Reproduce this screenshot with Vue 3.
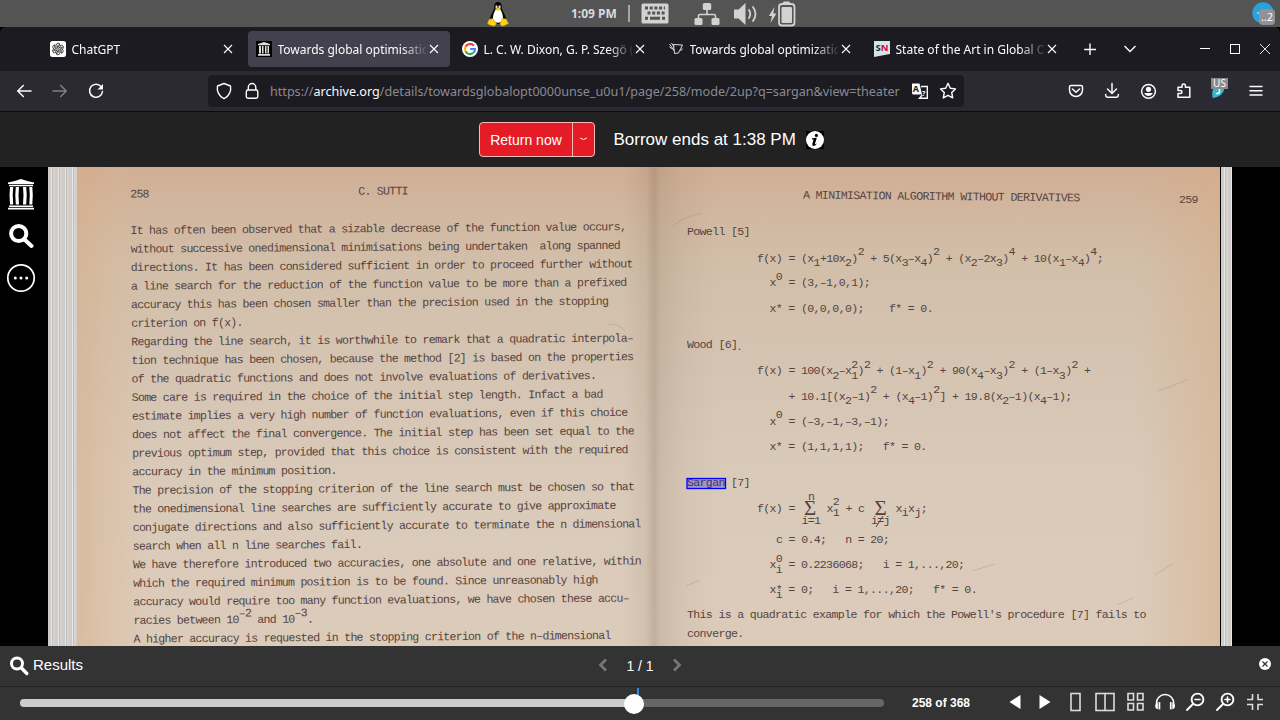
<script setup>
const tabs = [
  { title: 'ChatGPT', icon: 'gpt' },
  { title: 'Towards global optimisation', icon: 'archive', active: true },
  { title: 'L. C. W. Dixon, G. P. Szegö (e', icon: 'google' },
  { title: 'Towards global optimization', icon: 'sketch' },
  { title: 'State of the Art in Global Opt', icon: 'sn' },
]

// Typewritten notation: ^ raises the next character, _ lowers it, ~ steps back one column.
function parse(src, pitch) {
  const out = []
  let current = 0
  let dx = 0
  let i = 0
  while (i < src.length) {
    if (src[i] === '~') { dx -= pitch; i++; continue }
    let level = 0
    if (src[i] === '^') { level = -6.5; i++ } else if (src[i] === '_') { level = 4.5; i++ }
    const last = out[out.length - 1]
    if (last && level === current && !dx) last.t += src[i]
    else out.push({ t: src[i], dy: level - current, dx })
    current = level
    dx = 0
    i++
  }
  return out
}

const leftLines = [
  'It has often been observed that a sizable decrease of the function value occurs,',
  'without successive onedimensional minimisations being undertaken  along spanned',
  'directions. It has been considered sufficient in order to proceed further without',
  'a line search for the reduction of the function value to be more than a prefixed',
  'accuracy this has been chosen smaller than the precision used in the stopping',
  'criterion on f(x).',
  'Regarding the line search, it is worthwhile to remark that a quadratic interpola–',
  'tion technique has been chosen, because the method [2] is based on the properties',
  'of the quadratic functions and does not involve evaluations of derivatives.',
  'Some care is required in the choice of the initial step length. Infact a bad',
  'estimate implies a very high number of function evaluations, even if this choice',
  'does not affect the final convergence. The initial step has been set equal to the',
  'previous optimum step, provided that this choice is consistent with the required',
  'accuracy in the minimum position.',
  'The precision of the stopping criterion of the line search must be chosen so that',
  'the onedimensional line searches are sufficiently accurate to give approximate',
  'conjugate directions and also sufficiently accurate to terminate the n dimensional',
  'search when all n line searches fail.',
  'We have therefore introduced two accuracies, one absolute and one relative, within',
  'which the required minimum position is to be found. Since unreasonably high',
  'accuracy would require too many function evaluations, we have chosen these accu–',
  'racies between 10^–^2 and 10^–^3.',
  'A higher accuracy is requested in the stopping criterion of the n–dimensional',
].map((s) => parse(s, 6.2))

const rightLines = [
  [687, 234.5, 'Powell [5]'],
  [757, 261.5, 'f(x) = (x_1+10x_2)^2 + 5(x_3–x_4)^2 + (x_2–2x_3)^4 + 10(x_1–x_4)^4;'],
  [769.5, 286, 'x^0 = (3,–1,0,1);'],
  [769.5, 311.5, 'x* = (0,0,0,0);    f* = 0.'],
  [687, 348, 'Wood [6]'],
  [757, 374, 'f(x) = 100(x_2–x_1~^2)^2 + (1–x_1)^2 + 90(x_4–x_3)^2 + (1–x_3)^2 +'],
  [788.5, 399.5, '+ 10.1[(x_2–1)^2 + (x_4–1)^2] + 19.8(x_2–1)(x_4–1);'],
  [769.5, 424.5, 'x^0 = (–3,–1,–3,–1);'],
  [769.5, 449.5, 'x* = (1,1,1,1);   f* = 0.'],
  [687, 486, 'Sargan [7]'],
  [757, 511.5, 'f(x) ='],
  [826.5, 511.5, 'x_1~^2 + c'],
  [895.5, 511.5, 'x_ix_j;'],
  [776, 542.5, 'c = 0.4;   n = 20;'],
  [769.5, 568, 'x^0~_i = 0.2236068;   i = 1,...,20;'],
  [769.5, 593, 'x*~_i = 0;   i = 1,...,20;   f* = 0.'],
  [687, 618, "This is a quadratic example for which the Powell's procedure [7] fails to"],
  [687, 637, 'converge.'],
].map(([x, y, s]) => ({ x, y, parts: parse(s, 6.29) }))
</script>

<template>
  <div class="screen">
    <header class="panel">
      <svg class="tux" width="24" height="26" viewBox="0 0 24 26">
        <path d="M12 1C9 1 8 3.500 8.300 7.500C7 11 4 14 4 19.500C5 24 19 24 20 19.500C20.300 15 17 11 15.800 7.500C16 3.500 15 1 12 1Z" fill="#050505" />
        <path d="M9.500 8.500C8 12 6.800 14 7 18C8 23 16 23 17 18C17.200 14 15.800 11 14.500 8.500Z" fill="#fff" />
        <ellipse cx="10.500" cy="5.700" rx="1.100" ry="1.500" fill="#ddd" /><ellipse cx="13.600" cy="5.700" rx="1.100" ry="1.500" fill="#ddd" />
        <path d="M9 7.800L12 6.600L15.200 7.800L12 10Z" fill="#fcc916" />
        <path d="M1.500 23L3 18.500L6.500 17.500L10.500 22.500C10 25 7 25.500 5.500 24.500ZM22.500 22.500L20 18L16.500 17.500L14 22.500C14 25 17 25.500 18.500 24.500Z" fill="#fcd016" stroke="#d59a00" stroke-width=".5" />
      </svg>
      <span class="clock">1:09 PM</span>
      <i class="divider"></i>
      <svg class="kbd" width="28" height="21" viewBox="0 0 28 21">
        <rect x=".5" y=".5" width="27" height="20" rx="1.500" fill="#d2d2d2" />
        <path d="M4 5H24M6.500 10H24" stroke="#555" stroke-width="3" stroke-dasharray="3 1.700" />
        <path d="M4 15.300H7M9 15.300H19M21 15.300H24" stroke="#555" stroke-width="3" />
      </svg>
      <svg class="net" width="26" height="24" viewBox="0 0 26 24" fill="#d2d2d2">
        <rect x="8.800" y="1" width="8.400" height="7" rx="1.500" /><rect x=".5" y="16" width="8" height="7" rx="1.500" /><rect x="17.500" y="16" width="8" height="7" rx="1.500" />
        <path d="M13 7V12.500M4.500 17V14Q4.500 12.500 6 12.500H20Q21.500 12.500 21.500 14V17" fill="none" stroke="#d2d2d2" stroke-width="1.600" />
      </svg>
      <svg class="vol" width="26" height="24" viewBox="0 0 26 24">
        <path d="M1 7.500H5.500L12.500 1V23L5.500 16.500H1Z" fill="#d2d2d2" />
        <path d="M16 8Q18.500 12 16 16M20 5Q25 12 20 19" fill="none" stroke="#d2d2d2" stroke-width="1.800" stroke-linecap="round" />
      </svg>
      <svg class="bat" width="28" height="26" viewBox="0 0 28 26">
        <path d="M6.500 6L.8 15H4L2.500 22L8.500 12.500H5.300Z" fill="#d2d2d2" />
        <rect x="11" y="3" width="15.500" height="21.500" rx="3" fill="none" stroke="#d2d2d2" stroke-width="1.800" />
        <rect x="13.500" y="6" width="10.500" height="16" rx="1" fill="#d2d2d2" /><rect x="15" y=".5" width="7" height="3" rx="1" fill="#d2d2d2" />
      </svg>
      <span class="chat">
        <svg width="22" height="22" viewBox="0 0 22 22"><circle cx="11" cy="11" r="10.700" fill="#2aa1dc" /><path d="M4 11L15 8.500L12 15L9 12Z" fill="#fff" /></svg>
        <b class="count">..2</b>
      </span>
    </header>

    <nav class="tabs">
      <div v-for="tab in tabs" :key="tab.icon" class="tab" :class="{ active: tab.active }">
        <svg v-if="tab.icon === 'gpt'" width="16" height="16" viewBox="0 0 16 16">
          <rect width="16" height="16" rx="2.500" fill="#fff" />
          <g fill="none" stroke="#222" stroke-width=".8">
            <path v-for="a in 6" :key="a" :transform="`rotate(${a * 60} 8 8)`" d="M6 7V4.500Q6.100 2.400 8 2.200Q9.300 2.200 10 3.200L7.400 4.700V7.500" />
          </g>
        </svg>
        <svg v-else-if="tab.icon === 'archive'" width="16" height="16" viewBox="0 0 16 16">
          <rect width="16" height="16" fill="#000" />
          <path d="M2 3L8 1L14 3V4.300H2ZM3 5H5V12.500H3ZM6 5H7.500V12.500H6ZM9 5H10.500V12.500H9ZM11.500 5H13V12.500H11.500ZM2 13H14V14.800H2Z" fill="#ddd" />
        </svg>
        <svg v-else-if="tab.icon === 'google'" width="16" height="16" viewBox="0 0 16 16">
          <circle cx="8" cy="8" r="8" fill="#fff" />
          <g fill="none" stroke-width="2.100">
            <path d="M11.800 4.700A5 5 0 0 0 3.500 5.700" stroke="#ea4335" /><path d="M3.500 5.700A5 5 0 0 0 3.500 10.300" stroke="#fbbc05" />
            <path d="M3.500 10.300A5 5 0 0 0 11.300 11.800" stroke="#34a853" /><path d="M11.300 11.800A5 5 0 0 0 13 8H8.200" stroke="#4285f4" />
          </g>
        </svg>
        <svg v-else-if="tab.icon === 'sketch'" width="16" height="16" viewBox="0 0 16 16">
          <path d="M5.500 3.500L14.500 4L10.500 12L6.500 12.500ZM1.500 3L6.500 10M3.500 2L6 6M1.500 6L5.500 8.500M12.500 10L14.500 7.500" fill="none" stroke="#ddd" stroke-width="1" />
        </svg>
        <svg v-else width="16" height="16" viewBox="0 0 16 16">
          <path d="M0 0H16V13L0 16Z" fill="#d5e4e8" />
          <text x="1.600" y="10" class="sn" fill="#01324b">S<tspan fill="#e3002b">N</tspan></text>
        </svg>
        <span class="title">{{ tab.title }}</span>
        <svg class="close" width="12" height="12" viewBox="0 0 12 12"><path d="M2 2L10 10M10 2L2 10" stroke="#fbfbfe" stroke-width="1.100" /></svg>
      </div>
      <div class="tab-tools">
        <svg width="40" height="24" viewBox="0 0 40 24"><path d="M20 6.500V18M14.200 12.500H26" stroke="#fbfbfe" stroke-width="1.400" /></svg>
        <svg width="40" height="24" viewBox="0 0 40 24"><path d="M14.500 9L20 14.500L25.500 9" fill="none" stroke="#fbfbfe" stroke-width="1.400" /></svg>
      </div>
      <div class="win-tools">
        <svg width="30" height="24" viewBox="0 0 30 24"><path d="M10 11.500H20" stroke="#fff" stroke-width="1" /></svg>
        <svg width="30" height="24" viewBox="0 0 30 24"><rect x="10.500" y="7.500" width="9" height="9" fill="none" stroke="#fff" /></svg>
        <svg width="30" height="24" viewBox="0 0 30 24"><path d="M10 7L20 17M20 7L10 17" stroke="#fff" stroke-width=".9" /></svg>
      </div>
    </nav>

    <div class="toolbar">
      <div class="nav-icons">
        <svg class="tool" viewBox="0 0 36 36"><path d="M25 18H12M17.300 12.500L11.800 18L17.300 23.500" /></svg>
        <svg class="tool dim" viewBox="0 0 36 36"><path d="M11 18H24M18.700 12.500L24.200 18L18.700 23.500" /></svg>
        <svg class="tool" viewBox="0 0 36 36"><path d="M23.500 14.200A6.500 6.500 0 1 0 24.500 18.500" /><path d="M25 11V16.500H19.500Z" fill="#fbfbfe" stroke="none" /></svg>
      </div>
      <div class="urlbar">
        <svg class="uicon" viewBox="0 0 28 32"><path d="M14 8.500L20.500 11C21.500 16 19 21.500 14 23.700C9 21.500 6.500 16 7.500 11Z" stroke-linejoin="round" /></svg>
        <svg class="uicon" viewBox="0 0 28 32"><rect x="8.300" y="15" width="11.500" height="8.300" rx="1.700" /><path d="M10.300 15V12.500A3.700 4 0 0 1 17.800 12.500V15" /></svg>
        <span class="url">https://<em>archive.org</em>/details/towardsglobalopt0000unse_u0u1/page/258/mode/2up?q=sargan&amp;view=theater</span>
        <svg class="uicon" viewBox="0 0 28 32">
          <path d="M6 8.500H13.500L16 19.500H7.500Q6 19.500 6 18Z" fill="#fbfbfe" stroke="none" /><path d="M15 11.500H21.300V23.200H13.500L16.200 20" />
          <text x="6.800" y="16.500" class="glyph dark">A</text><text x="16" y="20.500" class="glyph small">?</text>
        </svg>
        <svg class="uicon" viewBox="0 0 28 32"><path d="M14 8.300L16.300 13.200L21.500 13.900L17.700 17.500L18.700 22.900L14 20.300L9.300 22.900L10.300 17.500L6.500 13.900L11.700 13.200Z" stroke-linejoin="round" /></svg>
      </div>
      <div class="ext-icons">
        <svg class="tool" viewBox="0 0 36 36"><path d="M13 12.500H23Q24.500 12.500 24.500 14V17A6.500 6.500 0 0 1 11.500 17V14Q11.500 12.500 13 12.500ZM14.500 16L18 19.300L21.500 16" /></svg>
        <svg class="tool" viewBox="0 0 36 36"><path d="M18 10.500V20.500M13.500 16L18 20.500L22.500 16M11.700 21.500V22.500Q11.700 24.200 13.400 24.200H22.600Q24.300 24.200 24.300 22.500V21.500" /></svg>
        <svg class="tool" viewBox="0 0 36 36"><circle cx="18.500" cy="18.300" r="6.900" /><circle cx="18.500" cy="16.300" r="2.600" fill="#fbfbfe" stroke="none" /><path d="M14.200 20H22.800Q21.500 23 18.500 23Q15.500 23 14.200 20Z" fill="#fbfbfe" stroke="none" /></svg>
        <svg class="tool" viewBox="0 0 36 36"><path d="M12 24.300V20.500H14.500Q16 20.500 16 19Q16 17.500 14.500 17.500H12V14.300H16V12.500Q16 11 17.700 11Q19.400 11 19.400 12.500V14.300H23.800V24.300Z" stroke-linejoin="round" /></svg>
        <span class="ext"><svg class="tool" viewBox="0 0 36 36"><path d="M10.500 25Q9.500 16 13 13H22.500Q22.500 23.500 10.500 25Z" fill="#36b7cf" stroke="none" /><path d="M17.500 16V19Q17 21 14.500 20.500" /></svg><b class="locale">US</b></span>
        <svg class="tool" viewBox="0 0 36 36"><path d="M12 13.500H24M12 17.700H24M12 22H24" /></svg>
      </div>
    </div>

    <div class="loanbar">
      <div class="return"><span>Return now</span><i><svg width="9" height="5" viewBox="0 0 9 5"><path d="M1.200 1Q4.500 4 7.800 1" fill="none" stroke="#fff" stroke-width="1" /></svg></i></div>
      <p class="borrow">Borrow ends at 1:38 PM</p>
      <svg class="info" width="18" height="18" viewBox="0 0 18 18"><rect width="18" height="18" fill="#000" /><circle cx="9" cy="9" r="9" fill="#fff" /><circle cx="10.400" cy="4.400" r="1.600" /><path d="M6 7.300L10.800 6.800L8.900 13Q9.200 13.600 11 12.300Q9.800 14.800 7.600 14.900Q5.800 14.800 6.300 12.900L7.600 8.500H6Z" /></svg>
    </div>

    <main class="theater">
      <aside class="side">
        <svg width="28" height="31" viewBox="0 0 28 31" fill="#fff"><path d="M1 3.500Q8 2 14 0Q20 2 27 3.500V5H1ZM2 5.800H26V7.200H2ZM2 26.500H26V28H2ZM1 28.800H27V30.500H1ZM3 8H6.200L5.700 16L6.200 25.500H3L2.500 16ZM8.800 8H12L11.500 16L12 25.500H8.800L8.300 16ZM16 8H19.200L19.700 16L19.200 25.500H16L16.500 16ZM22.300 8H25.300L25.800 16L25.300 25.500H22.300L22.800 16Z" /></svg>
        <svg width="26" height="26" viewBox="0 0 26 26" fill="none" stroke="#fff"><circle cx="10.700" cy="10.500" r="7.600" stroke-width="4" /><path d="M16.500 16.500L23.500 23" stroke-width="4" stroke-linecap="round" /></svg>
        <svg width="30" height="30" viewBox="0 0 30 30"><circle cx="15" cy="15" r="13.200" fill="none" stroke="#fff" stroke-width="1.700" /><g fill="#fff"><circle cx="9.300" cy="15" r="1.500" /><circle cx="15" cy="15" r="1.500" /><circle cx="20.700" cy="15" r="1.500" /></g></svg>
      </aside>
      <div class="book">
        <div class="edge left"></div>
        <div class="spread">
          <svg class="scan" width="1143" height="479" viewBox="77 167 1143 479">
            <g class="type l" transform="translate(130.500 234) rotate(-.43)">
              <text x="0" y="-36.500">258</text><text x="228" y="-37.500">C. SUTTI</text>
              <text v-for="(line, n) in leftLines" :key="n" x="0" :y="n * 18.57"><tspan v-for="(p, k) in line" :key="k" :dx="p.dx" :dy="p.dy">{{ p.t }}</tspan></text>
            </g>
            <g class="type r">
              <text x="803" y="198.500" transform="rotate(.6 803 198.500)">A MINIMISATION ALGORITHM WITHOUT DERIVATIVES</text><text x="1179" y="202.500">259</text>
              <text v-for="(line, n) in rightLines" :key="n" :x="line.x" :y="line.y"><tspan v-for="(p, k) in line.parts" :key="k" :dx="p.dx" :dy="p.dy">{{ p.t }}</tspan></text>
              <circle cx="739.500" cy="349.300" r=".8" />
              <text x="808" y="499.500">n</text><text x="801.500" y="524">i=1</text><text x="871" y="524">i=j</text>
              <path d="M876 527L883 516" stroke="#55443f" />
              <text class="sigma" x="804" y="514.500">Σ</text><text class="sigma" x="874.500" y="514.500">Σ</text>
            </g>
            <g fill="none" stroke="#8f7a66" stroke-width=".7" opacity=".4"><path d="M673 226Q685 216 702 213M1157 391Q1172 387 1188 379M1117 605L1133 598M972 571L995 564M1155 575L1172 564M686 586L700 580M607 324Q620 324 625 331" /></g>
            <rect x="687" y="478.500" width="38.500" height="10" fill="#00f" fill-opacity=".25" stroke="#00f" stroke-width="1.300" />
          </svg>
        </div>
        <div class="edge right"></div>
      </div>
    </main>

    <section class="results">
      <svg width="20" height="20" viewBox="0 0 20 20" fill="none" stroke="#fff"><circle cx="8" cy="7.500" r="5.500" stroke-width="3" /><path d="M12.500 12L17.800 17.500" stroke-width="3.300" stroke-linecap="round" /></svg>
      <span class="label">Results</span>
      <div class="pager">
        <svg width="10" height="14" viewBox="0 0 10 14"><path d="M8 1.500L2.500 7L8 12.500" /></svg><span>1 / 1</span><svg width="10" height="14" viewBox="0 0 10 14"><path d="M2 1.500L7.500 7L2 12.500" /></svg>
      </div>
      <svg class="dismiss" width="12" height="12" viewBox="0 0 12 12"><circle cx="6" cy="6" r="6" fill="#fff" /><path d="M3.500 3.500L8.500 8.500M8.500 3.500L3.500 8.500" stroke="#333" stroke-width="1.200" /></svg>
    </section>

    <footer class="controls">
      <div class="track"><i class="fill"></i><i class="mark"></i><i class="thumb"></i></div>
      <span class="count-label">258 of 368</span>
      <div class="buttons">
        <svg class="btn" viewBox="0 0 30 30"><path d="M20.500 8V22L9.500 15Z" fill="#fff" /></svg>
        <svg class="btn" viewBox="0 0 30 30"><path d="M9.500 8V22L20.500 15Z" fill="#fff" /></svg>
        <svg class="btn line" viewBox="0 0 30 30"><rect x="11" y="6.500" width="9" height="17" /></svg>
        <svg class="btn line" viewBox="0 0 30 30"><rect x="6" y="6.500" width="18" height="17" /><path d="M15 6.500V23.500" /></svg>
        <svg class="btn line" viewBox="0 0 30 30"><path d="M8 6.500H13.500V13H8ZM17.500 6.500H23V13H17.500ZM8 16.500H13.500V23H8ZM17.500 16.500H23V23H17.500Z" /></svg>
        <svg class="btn" viewBox="0 0 30 30"><path d="M6.500 20V16A8.600 8.600 0 0 1 23.700 16V20" fill="none" stroke="#fff" stroke-width="1.500" /><path d="M7.500 15.500L10.300 15V22.500L7 22Q5 21 5.200 18ZM22.700 15.500L19.900 15V22.500L23.200 22Q25.200 21 25 18Z" fill="#fff" /><path d="M8.300 15.500V22.300M21.900 15.500V22.300" stroke="#333" stroke-width=".7" /></svg>
        <svg class="btn mag" viewBox="0 0 30 30"><circle cx="17.500" cy="12.500" r="5.900" /><path d="M13 17L7 23" /><path d="M15 12.500H20" stroke-width="1.600" /></svg>
        <svg class="btn mag" viewBox="0 0 30 30"><circle cx="17.500" cy="12.500" r="5.900" /><path d="M13 17L7 23" /><path d="M15 12.500H20M17.500 10V15" stroke-width="1.600" /></svg>
        <svg class="btn line" viewBox="0 0 30 30"><path d="M7 12.500H12.500V7M23 12.500H18V7M7 17.500H12.500V23M23 17.500H18V23" stroke-width="1.600" /></svg>
      </div>
    </footer>
  </div>
</template>

<style scoped>
.screen { width: 1280px; height: 720px; overflow: hidden; display: flex; flex-direction: column; background: #000; font-family: "Liberation Sans", Arial, sans-serif; color: #fff; box-sizing: border-box; }
svg { display: block; flex: none; }
.panel { height: 27px; background: #545454; display: flex; align-items: center; font-family: "Noto Sans", sans-serif; flex: none; }
.tux { margin-left: 486px; }
.clock { margin-left: 61px; width: 48px; font-size: 12px; font-weight: 700; color: #dadada; white-space: nowrap; }
.divider { margin-left: 9px; width: 2px; height: 17px; background: #a5a5a5; }
.kbd { margin-left: 11px; }
.net { margin-left: 25px; }
.vol { margin-left: 13px; }
.bat { margin-left: 9px; }
.chat { margin-left: 456px; width: 24px; height: 23px; position: relative; }
.count { position: absolute; left: 7px; top: 7px; width: 16px; height: 16px; border-radius: 4px; background: #929292; color: #fff; font: 400 11px/16px "Noto Sans", sans-serif; text-align: center; }
.tabs { height: 44px; background: #1c1b22; display: flex; align-items: center; padding-left: 42px; gap: 4px; flex: none; font-family: "Noto Sans", sans-serif; border-radius: 6px 6px 0 0; }
.tab { width: 202px; height: 36px; box-sizing: border-box; padding: 0 10px 0 8px; display: flex; align-items: center; border-radius: 4px; flex: none; }
.tab.active { background: #42414d; }
.title { margin: 2px 0 0 5.500px; width: 148.500px; overflow: hidden; white-space: nowrap; font-size: 12px; line-height: 20px; color: #fbfbfe; mask-image: linear-gradient(to right, #000 124px, transparent 151px); }
.close { margin-left: 2px; }
.sn { font: 700 9.500px "Noto Sans", sans-serif; }
.tab-tools { display: flex; width: 80px; margin-left: -2.500px; }
.win-tools { display: flex; margin-left: 36.500px; }
.toolbar { height: 40px; background: #2b2a33; display: flex; align-items: center; border-bottom: 1px solid #0c0c0d; flex: none; }
.nav-icons, .ext-icons { display: flex; }
.nav-icons { padding-left: 6px; width: 208px; box-sizing: border-box; }
.ext-icons { margin-left: 94px; }
.tool { width: 36px; height: 36px; fill: none; stroke: #fbfbfe; stroke-width: 1.500; stroke-linecap: round; }
.dim { opacity: .4; }
.ext { position: relative; }
.locale { position: absolute; left: 9px; top: 5px; width: 17px; height: 11px; background: #8b8b8d; color: #fff; font: 400 10px/11px "Noto Sans", sans-serif; text-align: center; }
.urlbar { width: 756px; height: 32px; background: #1c1b22; border-radius: 4px; display: flex; align-items: center; box-sizing: border-box; padding-left: 2px; }
.uicon { width: 28px; height: 32px; fill: none; stroke: #fbfbfe; stroke-width: 1.400; }
.url { margin: 2px 0 0 4px; width: 636px; font: 12.600px/20px "Noto Sans", sans-serif; color: #8b8a91; white-space: nowrap; }
.url em { font-style: normal; color: #fbfbfe; }
.glyph { font: 700 9px "Noto Sans", sans-serif; stroke: none; fill: #fff; }
.glyph.dark { fill: #1c1b22; }
.glyph.small { font-size: 7px; }
.loanbar { height: 55px; background: #222; display: flex; align-items: center; padding-left: 479px; flex: none; }
.return { width: 116px; height: 35px; box-sizing: border-box; border: 1px solid #f7b9bc; border-radius: 4px; background: #e51c26; display: flex; font-size: 14px; line-height: 34px; }
.return span { width: 92px; text-align: center; border-right: 1.500px solid #f7b9bc; }
.return i { flex: 1; display: flex; align-items: center; justify-content: center; }
.borrow { margin: 1px 0 0 18.500px; width: 192.500px; font-size: 17px; white-space: nowrap; }
.theater { height: 479px; display: flex; flex: none; }
.side { width: 48px; box-sizing: border-box; padding: 12px 0 0 7px; display: flex; flex-direction: column; }
.side svg:nth-child(2) { margin: 13px 0 0 1px; }
.side svg:nth-child(3) { margin: 14px 0 0 -1px; }
.book { display: flex; width: 1184px; }
.edge { background: repeating-linear-gradient(to right, #cfccc9 0 3px, #e9e7e5 3px 4px, #c1bebb 4px 5px, #d6d3d0 5px 7px); }
.edge.left { width: 29px; }
.edge.right { width: 11px; margin-left: 1px; }
.spread {
  width: 1143px;
  background:
    linear-gradient(to right, rgba(90, 65, 40, 0) 545px, rgba(90, 65, 40, .08) 569px, rgba(75, 50, 30, .19) 577px, rgba(90, 70, 45, .12) 583px, rgba(90, 70, 45, .05) 605px, rgba(90, 70, 45, 0) 640px),
    linear-gradient(to right, rgba(216, 172, 134, .5) 0, rgba(218, 180, 144, .28) 35px, rgba(218, 180, 144, 0) 70px, rgba(218, 180, 144, 0) 1060px, rgba(216, 172, 134, .5) 1143px),
    linear-gradient(to bottom, #d0ae95 0, #d1b59d 35px, #d2bfaa 100px, #d5c4b2 200px, #dacab9 320px, #dccbb9 479px);
}
.type { font-family: "Liberation Mono", monospace; font-size: 11.600px; fill: #55443f; }
.type text { white-space: pre; }
.l { letter-spacing: -.762px; }
.r { letter-spacing: -.672px; }
.type .sigma { font-family: "Liberation Serif", serif; font-size: 21px; }
.results { height: 40px; background: #333; border-bottom: 1px solid #222; display: flex; align-items: center; padding-left: 9px; flex: none; box-sizing: content-box; }
.label { margin: -3px 0 0 4px; width: 60px; font-size: 15px; }
.pager { margin-left: 505px; display: flex; align-items: center; width: 84px; justify-content: space-between; font-size: 14px; }
.pager svg { fill: none; stroke: #777; stroke-width: 2.700; margin-top: -3px; }
.dismiss { margin: -4px 0 0 577px; }
.controls { height: 33px; background: #333; display: flex; align-items: center; padding: 0 0 2px 20px; box-sizing: border-box; flex: none; }
.track { position: relative; width: 864px; height: 8px; border-radius: 4px; background: #666; }
.track i { position: absolute; }
.fill { left: 0; top: 0; width: 614px; height: 8px; border-radius: 4px; background: #ccc; }
.mark { left: 617px; top: -11px; width: 2px; height: 7px; background: #3b8bd4; }
.thumb { left: 604px; top: -5px; width: 20px; height: 20px; border-radius: 50%; background: #fff; }
.count-label { margin-left: 28px; width: 88px; font-size: 12px; font-weight: 700; }
.buttons { display: flex; margin-top: -1px; }
.btn { width: 30px; height: 30px; }
.btn.line { fill: none; stroke: #ddd; stroke-width: 1.600; }
.btn.mag { fill: none; stroke: #fff; stroke-width: 1.900; stroke-linecap: round; }
</style>

<style>
body { margin: 0; background: #000; }
</style>
